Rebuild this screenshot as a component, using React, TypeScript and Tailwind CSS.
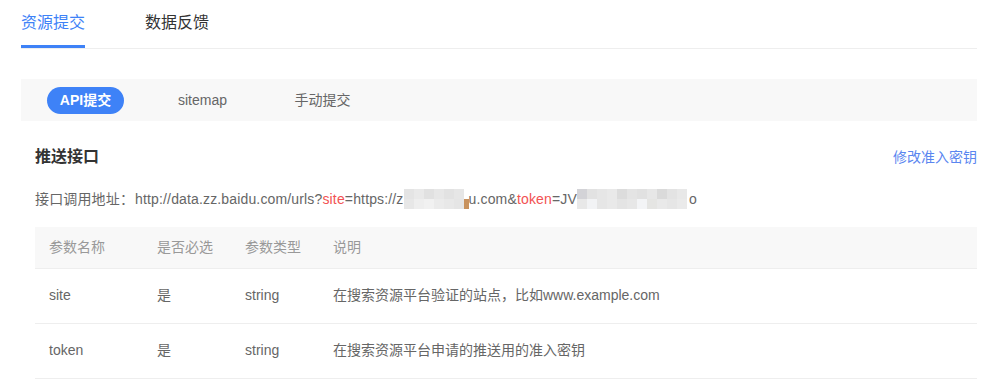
const font = "font-['Microsoft_YaHei','Liberation_Sans','Noto_Sans_CJK_SC',sans-serif]";

// redacted parts of the URL, drawn as a mosaic of grey cells
const mosaicA = [
  ["bg-[#e4e4e4]", "bg-[#e9e9e9]", "bg-[#e1e1e1]", "bg-[#e7e7e7]", "bg-[#e2e2e2]", "bg-[#e6e6e6]"],
  ["bg-[#e7e7e7]", "bg-[#eeeeee]", "bg-[#f1f1f1]", "bg-[#ebebeb]", "bg-[#e8e8e8]", "bg-[#e5e5e5]"],
];
const mosaicB = [
  ["bg-[#d3d3d7]", "bg-[#e2e2e2]", "bg-[#e6e6e6]", "bg-[#e9e9e9]", "bg-[#dcdcdc]", "bg-[#e4e4e4]", "bg-[#e1e1e1]", "bg-[#e7e7e7]", "bg-[#dadada]", "bg-[#e3e3e3]", "bg-[#e8e8e8]"],
  ["bg-[#e8e8e8]", "bg-[#f2f3f5]", "bg-[#e6e6e6]", "bg-[#e9e9e9]", "bg-[#e4e4e4]", "bg-[#e7e7e7]", "bg-[#f3f4f6]", "bg-[#e5e5e3]", "bg-[#e9e9e9]", "bg-[#e6e6e6]", "bg-[#eaeaea]"],
];

function Mosaic({ cells }: { cells: string[][] }) {
  return (
    <span className="inline-flex flex-col align-middle">
      {cells.map((row, i) => (
        <span key={i} className="flex">
          {row.map((c, j) => (
            <span key={j} className={`block w-[10px] h-[10px] ${c}`} />
          ))}
        </span>
      ))}
    </span>
  );
}

const params = [
  { name: "site", req: "是", type: "string", desc: "在搜索资源平台验证的站点，比如www.example.com" },
  { name: "token", req: "是", type: "string", desc: "在搜索资源平台申请的推送用的准入密钥" },
];

export default function App() {
  return (
    <div className={`w-[1002px] h-[390px] bg-white overflow-hidden pl-[21px] pr-[25px] ${font}`}>
      <div className="flex border-b border-[#eeeeee]">
        <div className="pt-[12px] pb-[11px] border-b-[3px] border-[#3e82f7] text-[16px] leading-[22px] text-[#3e82f7]">
          资源提交
        </div>
        <div className="ml-[60px] pt-[12px] pb-[11px] border-b-[3px] border-transparent text-[16px] leading-[22px] text-[#333333]">
          数据反馈
        </div>
      </div>

      <div className="mt-[30px] h-[42px] bg-[#f8f8f8] flex items-center pl-[26px] text-[14px]">
        <div className="w-[77px] h-[27px] rounded-full bg-[#3e82f7] text-white font-bold flex items-center justify-center">
          API提交
        </div>
        <div className="w-[77px] ml-[40px] text-center text-[#666666]">sitemap</div>
        <div className="w-[77px] ml-[43px] text-center text-[#666666]">手动提交</div>
      </div>

      <div className="pl-[14px]">
        <div className="mt-[25px] flex items-center justify-between">
          <h2 className="text-[16px] leading-[22px] font-bold text-[#333333]">推送接口</h2>
          <a className="text-[14px] text-[#5a86f0] cursor-pointer">修改准入密钥</a>
        </div>

        <div className="mt-[21px] text-[14px] leading-[20px] text-[#666666] flex items-center whitespace-nowrap tracking-[0.15px]">
          <span>接口调用地址：</span>
          <span className="ml-[1px]">http://data.zz.baidu.com/urls?</span>
          <span className="text-[#f25252]">site</span>
          <span>=https://z</span>
          <Mosaic cells={mosaicA} />
          <span className="w-[5px] h-[10px] bg-[#c8925e] self-end" />
          <span>u.com&amp;</span>
          <span className="text-[#f25252]">token</span>
          <span>=JV</span>
          <Mosaic cells={mosaicB} />
          <span className="ml-[2px]">o</span>
        </div>

        <table className="mt-[18px] w-full text-[14px] border-collapse">
          <thead>
            <tr className="h-[41px] bg-[#f8f8f8] text-[#999999] text-left">
              <th className="w-[108px] pl-[14px] font-normal">参数名称</th>
              <th className="w-[88px] pl-[14px] font-normal">是否必选</th>
              <th className="w-[88px] pl-[14px] font-normal">参数类型</th>
              <th className="pl-[14px] font-normal">说明</th>
            </tr>
          </thead>
          <tbody className="text-[#666666]">
            {params.map((p) => (
              <tr key={p.name} className="h-[55px] border-t border-b border-[#eeeeee]">
                <td className="pl-[14px]">{p.name}</td>
                <td className="pl-[14px]">{p.req}</td>
                <td className="pl-[14px]">{p.type}</td>
                <td className="pl-[14px]">{p.desc}</td>
              </tr>
            ))}
          </tbody>
        </table>
      </div>
    </div>
  );
}
